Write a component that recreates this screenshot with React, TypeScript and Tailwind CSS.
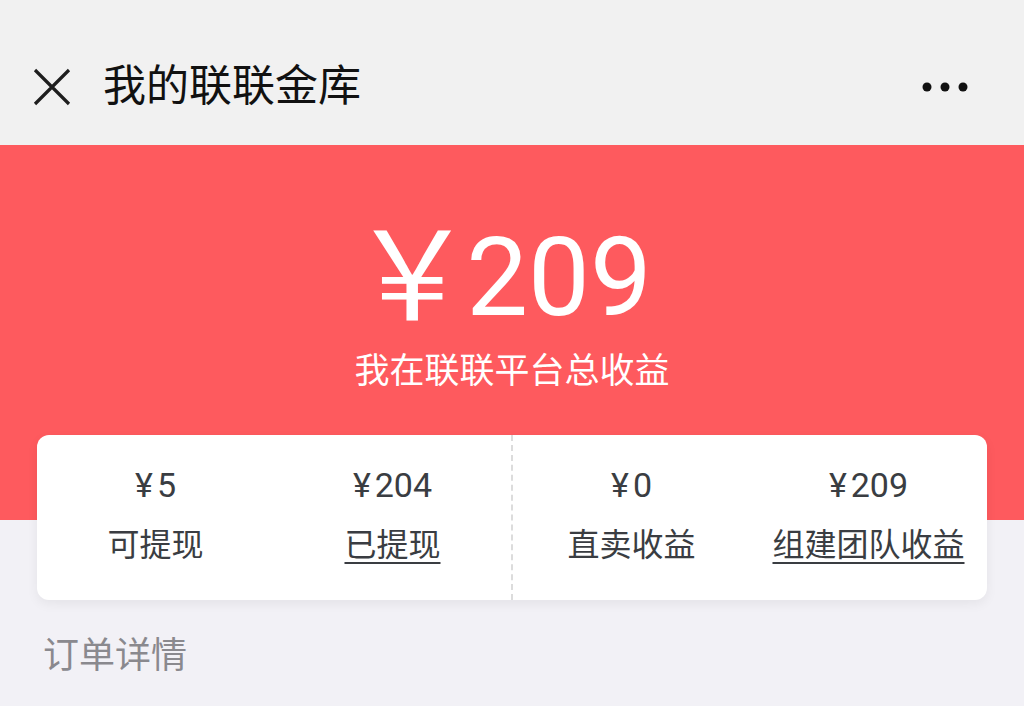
import React from "react";

const font = { fontFamily: "Roboto, 'Noto Sans CJK SC', sans-serif" };

function Stat({ amount, label, underline }: { amount: string; label: string; underline?: boolean }) {
  return (
    <div className="flex-1 flex flex-col items-center">
      <div className="text-[34px] leading-none text-[#3a3d42] h-[40px] flex items-center">
        <span className="mr-[4px]">¥</span>
        <span>{amount}</span>
      </div>
      <div
        className={`mt-[24px] text-[32px] leading-none text-[#3a3d42] ${underline ? "underline underline-offset-[6px] decoration-[2px]" : ""}`}
      >
        {label}
      </div>
    </div>
  );
}

export default function App() {
  return (
    <div className="w-[1024px] h-[706px] overflow-hidden bg-[#f2f1f6]" style={font}>
      {/* Header */}
      <div className="h-[145px] bg-[#f1f1f1] flex items-center px-[33px] pt-[28px]">
        <svg width="38" height="38" viewBox="0 0 38 38" className="shrink-0">
          <path d="M2 2 L36 36 M36 2 L2 36" stroke="#1e1e1e" strokeWidth="3.2" strokeLinecap="butt" />
        </svg>
        <div className="ml-[32px] text-[43px] leading-none text-[#111] font-normal">我的联联金库</div>
        <div className="flex-1" />
        <svg width="50" height="12" viewBox="0 0 50 12" className="mr-[20px]">
          <circle cx="6" cy="6" r="4.5" fill="#111" />
          <circle cx="24" cy="6" r="4.5" fill="#111" />
          <circle cx="42" cy="6" r="4.5" fill="#111" />
        </svg>
      </div>

      {/* Red hero */}
      <div className="h-[375px] bg-[#fe5a5e] flex flex-col items-center pt-[78px]">
        <div className="flex items-center text-white leading-none h-[110px] pr-[22px]">
          <span className="text-[124px] -mr-[8px]">￥</span>
          <span className="text-[110px]">209</span>
        </div>
        <div className="mt-[21px] text-[35px] leading-none text-white">我在联联平台总收益</div>
      </div>

      {/* Card */}
      <div className="mx-[37px] -mt-[85px] h-[165px] bg-white rounded-[12px] shadow-[0_4px_12px_rgba(0,0,0,0.06)] flex relative">
        <div className="flex-1 flex pt-[30px]">
          <Stat amount="5" label="可提现" />
          <Stat amount="204" label="已提现" underline />
        </div>
        <div className="w-0 border-l-2 border-dashed border-[#dcdcdc]" />
        <div className="flex-1 flex pt-[30px]">
          <Stat amount="0" label="直卖收益" />
          <Stat amount="209" label="组建团队收益" underline />
        </div>
      </div>

      {/* Order details */}
      <div className="px-[43px] pt-[38px] text-[36px] leading-none text-[#8a898e]">订单详情</div>
    </div>
  );
}
